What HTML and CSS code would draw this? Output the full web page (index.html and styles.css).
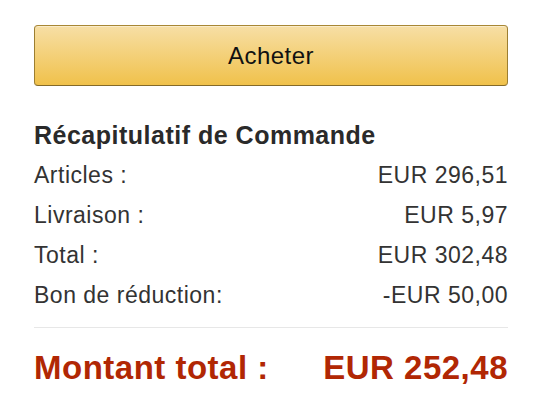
FILE: index.html
```html
<!DOCTYPE html>
<html lang="fr">
<head>
<meta charset="utf-8">
<link rel="stylesheet" href="styles.css">
</head>
<body>
<div class="box">
  <button class="buy">Acheter</button>
  <h2 class="title">Récapitulatif de Commande</h2>
  <div class="rows">
    <div class="row"><span>Articles :</span><span>EUR 296,51</span></div>
    <div class="row"><span>Livraison :</span><span>EUR 5,97</span></div>
    <div class="row"><span>Total :</span><span>EUR 302,48</span></div>
    <div class="row"><span>Bon de réduction:</span><span>-EUR 50,00</span></div>
  </div>
  <div class="total"><span>Montant total :</span><span>EUR 252,48</span></div>
</div>
</body>
</html>
```
FILE: styles.css
```css
html, body {
  margin: 0;
  padding: 0;
  background: #fff;
}
body {
  font-family: "Liberation Sans", Arial, sans-serif;
  color: #333;
}
.box {
  width: 474px;
  margin: 0 0 0 34px;
  padding-top: 25px;
}
.buy {
  display: block;
  width: 100%;
  height: 61px;
  box-sizing: border-box;
  border: 1px solid;
  border-color: #a88734 #9c7e31 #846a29;
  border-radius: 4px;
  background: linear-gradient(to bottom, #f7dfa5, #f0c14b);
  box-shadow: inset 0 1px 0 rgba(255,255,255,0.4);
  font-family: inherit;
  font-size: 24px;
  letter-spacing: 0.5px;
  color: #111;
  padding: 1px 0 0;
}
.title {
  margin: 34px 0 0;
  font-size: 25px;
  letter-spacing: 0.5px;
  font-weight: bold;
  color: #2a2a2a;
  line-height: 30px;
}
.rows {
  margin-top: 5px;
}
.row {
  display: flex;
  justify-content: space-between;
  font-size: 23px;
  letter-spacing: 0.5px;
  line-height: 40px;
  color: #333;
}
.total {
  display: flex;
  justify-content: space-between;
  border-top: 1px solid #e7e7e7;
  margin-top: 12px;
  padding-top: 20px;
  font-size: 33px;
  letter-spacing: 0.5px;
  font-weight: bold;
  line-height: 40px;
  color: #b12704;
}
```
